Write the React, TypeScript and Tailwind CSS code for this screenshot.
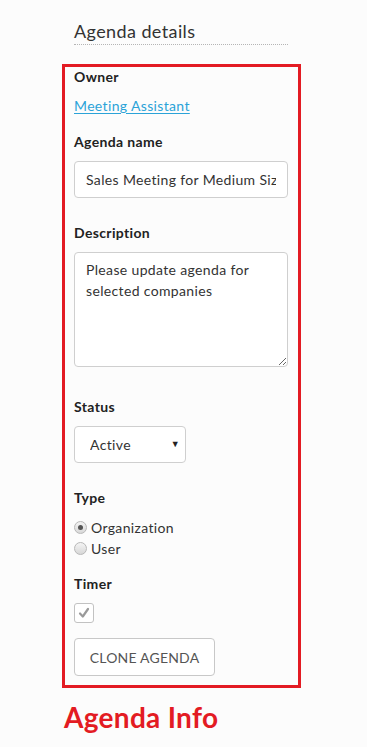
import { useState } from 'react';

export default function App() {
  const [name, setName] = useState('Sales Meeting for Medium Size Companies');
  const [desc, setDesc] = useState('Please update agenda for selected companies');
  const [status, setStatus] = useState('Active');
  const [type, setType] = useState<'org' | 'user'>('org');
  const [timer, setTimer] = useState(true);

  return (
    <div className="min-h-[747px] w-[367px] bg-[#fcfcfc] font-['Lato','Liberation_Sans',sans-serif] tracking-[0.35px] text-[#222]">
      <div className="pl-[62px] pt-[20px]">
        {/* heading */}
        <div className="ml-[12px] w-[214px] border-b border-dotted border-[#b5b5b5] pb-[2px] text-[18px] leading-[22px] tracking-[0.4px] text-[#333]">
          Agenda details
        </div>

        {/* form box */}
        <div className="mt-[19px] w-[239px] border-[3px] border-[#e31b23] pl-[9px] pr-[10px] pb-[9px]">
          <div className="text-[14px] font-bold leading-[20px]">Owner</div>
          <a href="#" className="mt-[9px] block w-fit text-[14px] leading-[20px] text-[#2ba3d8] underline underline-offset-2">
            Meeting Assistant
          </a>

          <div className="mt-[16px] text-[14px] font-bold leading-[20px]">Agenda name</div>
          <input
            value={name}
            onChange={e => setName(e.target.value)}
            className="mt-[9px] block h-[37px] w-full rounded-[4px] border border-[#cfcfcf] bg-white px-[11px] text-[14px] tracking-[0.35px] text-[#333] outline-none"
          />

          <div className="mt-[25px] text-[14px] font-bold leading-[20px]">Description</div>
          <textarea
            value={desc}
            onChange={e => setDesc(e.target.value)}
            className="mt-[9px] block h-[115px] w-full rounded-[4px] border border-[#cfcfcf] bg-white px-[11px] py-[6px] text-[14px] leading-[21px] tracking-[0.35px] text-[#333] outline-none"
          />

          <div className="mt-[30px] text-[14px] font-bold leading-[20px]">Status</div>
          <div className="relative mt-[9px] h-[37px] w-[112px]">
            <select
              value={status}
              onChange={e => setStatus(e.target.value)}
              className="h-full w-full appearance-none rounded-[4px] border border-[#cfcfcf] bg-white pl-[15px] text-[14px] tracking-[0.35px] text-[#333] outline-none"
            >
              <option>Active</option>
              <option>Inactive</option>
            </select>
            <span className="pointer-events-none absolute right-[6px] top-[13px] text-[9px] leading-[10px] text-[#222]">▼</span>
          </div>

          <div className="mt-[25px] text-[14px] font-bold leading-[20px]">Type</div>
          <div className="mt-[9px] flex flex-col">
            {[
              { key: 'org' as const, label: 'Organization' },
              { key: 'user' as const, label: 'User' },
            ].map(opt => (
              <label key={opt.key} className="flex h-[21px] cursor-pointer items-center gap-[4px] text-[14px] text-[#333]">
                <span
                  onClick={() => setType(opt.key)}
                  className="flex h-[13px] w-[13px] items-center justify-center rounded-full border border-[#b8b8b8] bg-gradient-to-b from-[#f4f4f4] to-[#d8d8d8]"
                >
                  {type === opt.key && <span className="h-[5px] w-[5px] rounded-full bg-[#555]" />}
                </span>
                {opt.label}
              </label>
            ))}
          </div>

          <div className="mt-[15px] text-[14px] font-bold leading-[20px]">Timer</div>
          <button
            onClick={() => setTimer(!timer)}
            className="mt-[9px] flex h-[20px] w-[20px] items-center justify-center rounded-[3px] border border-[#c2c2c2] bg-white"
          >
            {timer && (
              <svg width="12" height="12" viewBox="0 0 12 12">
                <path d="M2 6.5 L4.8 9.5 L10 2" fill="none" stroke="#9a9a9a" strokeWidth="2.2" strokeLinecap="round" strokeLinejoin="round" />
              </svg>
            )}
          </button>

          <button className="mt-[15px] h-[38px] w-[141px] rounded-[4px] border border-[#c8c8c8] bg-white text-[14px] tracking-[0.2px] text-[#555]">
            CLONE AGENDA
          </button>
        </div>

        <div className="mt-[12px] ml-[2px] text-[28px] font-bold leading-[34px] tracking-[0.3px] text-[#e31b23]">Agenda Info</div>
      </div>
    </div>
  );
}
